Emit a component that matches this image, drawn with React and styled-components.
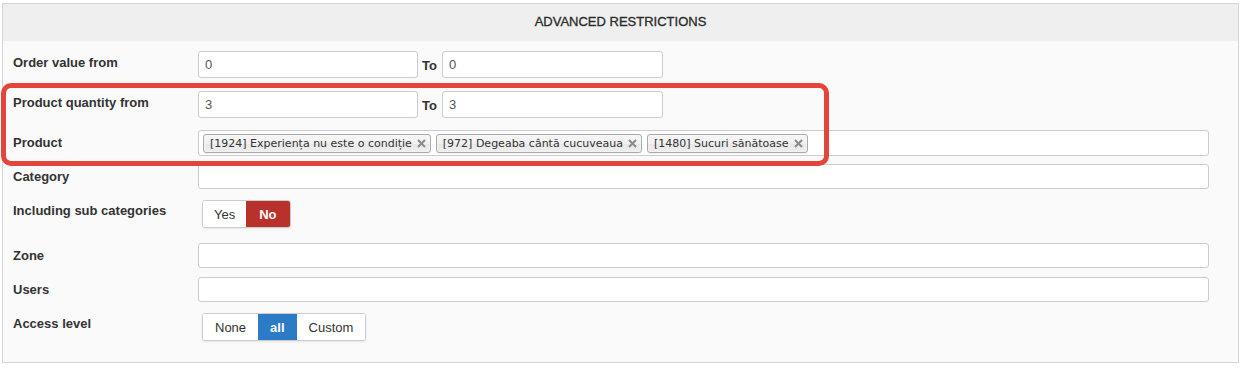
import React from 'react';
import styled, { createGlobalStyle } from 'styled-components';

const Global = createGlobalStyle`
  html, body { margin: 0; padding: 0; background: #fff; }
  body { font-family: "Liberation Sans", Arial, sans-serif; }
`;

const Page = styled.div`
  padding: 3px 3px 6px 2px;
`;

const Panel = styled.section`
  position: relative;
  border: 1px solid #d4d4d4;
  background: #fafafa;
  padding-bottom: 21px;
`;

const Header = styled.h3`
  margin: 0;
  height: 37px;
  line-height: 35px;
  background: #efefef;
  text-align: center;
  font-size: 13px;
  font-weight: normal;
  color: #2a2a2a;
  -webkit-text-stroke: 0.3px #2a2a2a;
  text-transform: uppercase;
`;

const Row = styled.div`
  display: grid;
  grid-template-columns: 185px 1fr;
  padding: 0 29px 0 10px;
  margin-top: ${(p) => p.$mt}px;
`;

const Label = styled.div`
  font-weight: bold;
  font-size: 13px;
  color: #333;
  line-height: 16px;
  padding-top: ${(p) => p.$pt ?? 5}px;
`;

const Value = styled.div`
  display: flex;
  align-items: center;
`;

const Input = styled.input`
  box-sizing: border-box;
  width: ${(p) => (p.$w ? `${p.$w}px` : '100%')};
  height: ${(p) => p.$h || 25}px;
  border: 1px solid #ccc;
  border-radius: 3px;
  background: #fff;
  padding: 0 6px;
  font-family: "Liberation Sans", Arial, sans-serif;
  font-size: 13px;
  color: #555;
  outline: none;
`;

const To = styled.span`
  font-weight: bold;
  font-size: 13px;
  color: #333;
  margin: 2px 5px 0 4px;
`;

const ChosenBox = styled.div`
  box-sizing: border-box;
  width: 100%;
  height: 26px;
  border: 1px solid #ccc;
  border-radius: 3px;
  background: #fff;
  display: flex;
  align-items: center;
  gap: 5px;
  padding: 0 4px;
`;

const Tag = styled.span`
  display: inline-flex;
  align-items: center;
  box-sizing: border-box;
  height: 19px;
  padding: 0 4px 0 6px;
  border: 1px solid #aaa;
  border-radius: 3px;
  background: linear-gradient(#f4f4f4 20%, #f0f0f0 50%, #e8e8e8 52%, #eee 100%);
  box-shadow: inset 0 0 2px #fff, 0 1px 0 rgba(0, 0, 0, 0.05);
  font-family: "DejaVu Sans", Verdana, sans-serif;
  font-size: 11px;
  color: #333;
  white-space: nowrap;
`;

const TagClose = styled.svg`
  width: 9px;
  height: 9px;
  margin-left: 5px;
  flex: none;
`;

const BtnGroup = styled.div`
  display: inline-flex;
  margin-left: 4px;
  border: 1px solid #ccc;
  border-radius: 3px;
  overflow: hidden;
  box-shadow: 0 1px 2px rgba(0, 0, 0, 0.08);
  background: #fff;
`;

const Btn = styled.span`
  display: inline-flex;
  align-items: center;
  height: 26px;
  padding: 0 ${(p) => p.$px ?? 12}px;
  font-size: 13px;
  color: ${(p) => (p.$active ? '#fff' : '#333')};
  font-weight: ${(p) => (p.$active ? 'bold' : 'normal')};
  background: ${(p) => p.$active || '#fff'};
`;

const Highlight = styled.div`
  position: absolute;
  left: -2px;
  top: 79px;
  width: 828px;
  height: 83px;
  box-sizing: border-box;
  border: 5px solid #e4453b;
  border-radius: 10px;
  pointer-events: none;
`;

const X = () => (
  <TagClose viewBox="0 0 9 9">
    <path d="M1 1 L8 8 M8 1 L1 8" stroke="#8a8a8a" strokeWidth="2" strokeLinecap="butt" />
  </TagClose>
);

const products = [
  '[1924] Experiența nu este o condiție',
  '[972] Degeaba cântă cucuveaua',
  '[1480] Sucuri sănătoase',
];

export default function App() {
  return (
    <Page>
      <Global />
      <Panel>
        <Header>Advanced restrictions</Header>

        <Row $mt={10}>
          <Label $pt={4}>Order value from</Label>
          <Value>
            <Input $w={220} $h={27} defaultValue="0" />
            <To>To</To>
            <Input $w={221} $h={27} defaultValue="0" />
          </Value>
        </Row>

        <Row $mt={13}>
          <Label $pt={4}>Product quantity from</Label>
          <Value>
            <Input $w={220} $h={27} defaultValue="3" />
            <To>To</To>
            <Input $w={221} $h={27} defaultValue="3" />
          </Value>
        </Row>

        <Row $mt={12}>
          <Label>Product</Label>
          <Value>
            <ChosenBox>
              {products.map((p) => (
                <Tag key={p}>
                  {p}
                  <X />
                </Tag>
              ))}
            </ChosenBox>
          </Value>
        </Row>

        <Row $mt={8}>
          <Label>Category</Label>
          <Value>
            <Input />
          </Value>
        </Row>

        <Row $mt={11}>
          <Label $pt={3}>Including sub categories</Label>
          <Value>
            <BtnGroup>
              <Btn $px={11}>Yes</Btn>
              <Btn $px={13} $active="#b8312b">No</Btn>
            </BtnGroup>
          </Value>
        </Row>

        <Row $mt={15}>
          <Label>Zone</Label>
          <Value>
            <Input />
          </Value>
        </Row>

        <Row $mt={9}>
          <Label>Users</Label>
          <Value>
            <Input />
          </Value>
        </Row>

        <Row $mt={11}>
          <Label $pt={3}>Access level</Label>
          <Value>
            <BtnGroup>
              <Btn>None</Btn>
              <Btn $active="#2b7bc7">all</Btn>
              <Btn>Custom</Btn>
            </BtnGroup>
          </Value>
        </Row>

        <Highlight />
      </Panel>
    </Page>
  );
}
